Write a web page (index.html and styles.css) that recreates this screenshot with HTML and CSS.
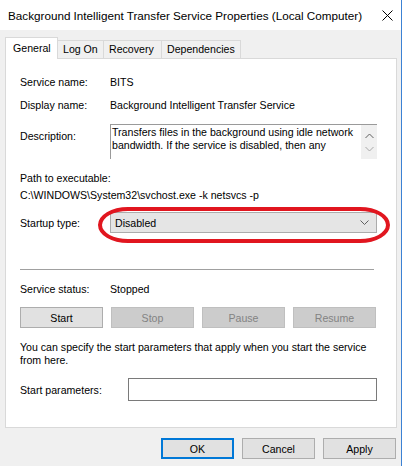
FILE: index.html
```html
<!DOCTYPE html>
<html lang="en">
<head>
  <meta charset="UTF-8">
  <title>Background Intelligent Transfer Service Properties</title>
  <link rel="stylesheet" href="styles.css">
</head>
<body>
  <div class="window">
    <div class="titlebar">
      <span class="title">Background Intelligent Transfer Service Properties (Local Computer)</span>
      <svg class="close" width="11" height="11" viewBox="0 0 11 11">
        <path d="M0.5 0.5 L10.5 10.5 M10.5 0.5 L0.5 10.5" stroke="#000" stroke-width="1" fill="none"/>
      </svg>
    </div>

    <div class="dialog">
      <div class="tabs">
        <div class="tab active">General</div>
        <div class="tab">Log On</div>
        <div class="tab">Recovery</div>
        <div class="tab">Dependencies</div>
      </div>

      <div class="panel">
        <div class="row row-name">
          <span class="label">Service name:</span>
          <span>BITS</span>
        </div>
        <div class="row row-display">
          <span class="label">Display name:</span>
          <span>Background Intelligent Transfer Service</span>
        </div>
        <div class="row row-desc">
          <span class="label">Description:</span>
          <div class="desc-box">
            <div class="desc-text">Transfers files in the background using idle network bandwidth. If the service is disabled, then any</div>
            <div class="scroll">
              <svg width="9" height="6" viewBox="0 0 9 6"><path d="M0.5 5 L4.5 1 L8.5 5" stroke="#606060" fill="none"/></svg>
              <svg width="9" height="6" viewBox="0 0 9 6"><path d="M0.5 1 L4.5 5 L8.5 1" stroke="#a8a8a8" fill="none"/></svg>
            </div>
          </div>
        </div>
        <div class="path-label">Path to executable:</div>
        <div class="path-value">C:\WINDOWS\System32\svchost.exe -k netsvcs -p</div>
        <div class="row row-startup">
          <span class="label">Startup type:</span>
          <div class="select">
            <span>Disabled</span>
            <svg width="9" height="5" viewBox="0 0 9 5"><path d="M0.5 0.5 L4.5 4.5 L8.5 0.5" stroke="#606060" fill="none"/></svg>
          </div>
          <div class="highlight"></div>
        </div>

        <div class="separator"></div>

        <div class="row row-status">
          <span class="label">Service status:</span>
          <span>Stopped</span>
        </div>
        <div class="actions">
          <button class="btn">Start</button>
          <button class="btn" disabled>Stop</button>
          <button class="btn" disabled>Pause</button>
          <button class="btn" disabled>Resume</button>
        </div>
        <p class="hint">You can specify the start parameters that apply when you start the service from here.</p>
        <div class="row row-params">
          <span class="label label-wide">Start parameters:</span>
          <div class="input"></div>
        </div>
      </div>

      <div class="footer">
        <button class="btn btn-foot default">OK</button>
        <button class="btn btn-foot">Cancel</button>
        <button class="btn btn-foot">Apply</button>
      </div>
    </div>
  </div>
</body>
</html>
```

FILE: styles.css
```css
html, body {
  margin: 0;
  padding: 0;
  background: #fff;
  font-family: "Liberation Sans", Arial, sans-serif;
  font-size: 10.6px;
  color: #000;
}

.window {
  width: 401px;
  height: 466px;
  border-right: 1px solid #3c82d4;
  background: #f0f0f0;
}

.titlebar {
  height: 30px;
  background: #fff;
  display: flex;
  align-items: center;
  padding-left: 8px;
  box-sizing: border-box;
}

.title {
  font-size: 11.7px;
  flex: 1;
}

.close {
  margin-right: 8px;
}

.dialog {
  padding-top: 7px;
}

/* tabs */
.tabs {
  display: flex;
  align-items: flex-end;
  height: 21px;
  padding-left: 5px;
}

.tab {
  height: 18px;
  line-height: 17px;
  box-sizing: border-box;
  border: 1px solid #d9d9d9;
  border-bottom: none;
  border-left: none;
  background: #f0f0f0;
  padding: 0 0 0 5px;
  white-space: nowrap;
}

.tab:nth-child(2) { width: 46px; }
.tab:nth-child(3) { width: 58px; }
.tab:nth-child(4) { width: 79px; }

.tab.active {
  height: 22px;
  width: 53px;
  line-height: 20px;
  margin-bottom: -1px;
  background: #fff;
  border-left: 1px solid #d9d9d9;
  padding-left: 7px;
  position: relative;
  z-index: 1;
}

.panel {
  margin-left: 5px;
  width: 392px;
  height: 370px;
  box-sizing: border-box;
  border: 1px solid #d9d9d9;
  background: #fff;
  padding-left: 14px;
}

.row {
  display: flex;
  align-items: center;
}

.label {
  width: 90px;
  flex-shrink: 0;
}

.label-wide {
  width: 108px;
}

.row-name { margin-top: 15px; height: 16px; }
.row-display { margin-top: 7px; height: 16px; }

.row-desc {
  margin-top: 11px;
  align-items: flex-start;
}

.row-desc .label {
  margin-top: 4px;
  line-height: 16px;
}

.desc-box {
  width: 267px;
  height: 35px;
  box-sizing: border-box;
  border-top: 1px solid #9a9a9a;
  border-left: 1px solid #9a9a9a;
  display: flex;
}

.desc-text {
  flex: 1;
  line-height: 13px;
  padding: 1px 4px 0 1px;
}

.scroll {
  width: 16px;
  background: #f0f0f0;
  display: flex;
  flex-direction: column;
  align-items: center;
  justify-content: space-around;
  padding: 4px 0 3px;
  box-sizing: border-box;
}

.path-label {
  margin-top: 11px;
  line-height: 16px;
}

.path-value {
  margin-top: 1px;
  line-height: 16px;
}

.row-startup {
  margin-top: 9px;
  position: relative;
}

.select {
  width: 267px;
  height: 21px;
  box-sizing: border-box;
  border: 1px solid #acacac;
  background: #e5e5e5;
  display: flex;
  align-items: center;
  justify-content: space-between;
  padding: 0 7px 0 4px;
}

.highlight {
  position: absolute;
  left: 78px;
  top: -5px;
  width: 292px;
  height: 36px;
  box-sizing: border-box;
  border: 4px solid #e1161f;
  border-radius: 30px / 18px;
}

.separator {
  margin-top: 36px;
  width: 354px;
  border-top: 1px solid #a0a0a0;
}

.row-status {
  margin-top: 11px;
  height: 16px;
}

.actions {
  margin-top: 10px;
  display: flex;
  gap: 8px;
}

.btn {
  font-family: inherit;
  font-size: inherit;
  color: #000;
  width: 83px;
  height: 21px;
  padding: 0;
  background: #e1e1e1;
  border: 1px solid #adadad;
}

.btn[disabled] {
  background: #cccccc;
  border-color: #bfbfbf;
  color: #838383;
}

.hint {
  margin: 13px 0 0;
  line-height: 13px;
  width: 360px;
}

.row-params {
  margin-top: 11px;
}

.input {
  width: 249px;
  height: 23px;
  box-sizing: border-box;
  border: 1px solid #7a7a7a;
  background: #fff;
}

.footer {
  margin-top: 10px;
  display: flex;
  justify-content: flex-end;
  gap: 8px;
  padding-right: 5px;
}

.btn-foot {
  width: 73px;
}

.btn-foot.default {
  border: 2px solid #0078d7;
}
```
